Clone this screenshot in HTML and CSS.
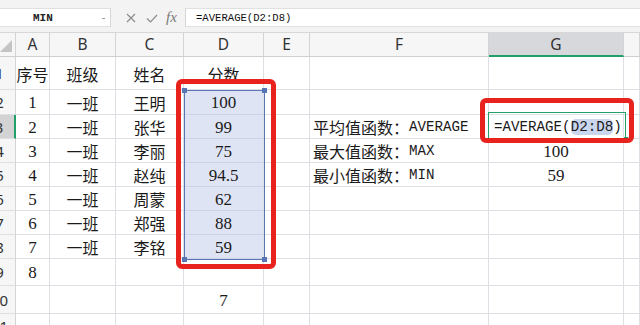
FILE: index.html
```html
<!DOCTYPE html>
<html>
<head>
<meta charset="utf-8">
<link rel="stylesheet" href="styles.css">
</head>
<body>
<div class="toolbar">
  <div class="namebox"><span class="nb-text">MIN</span><span class="nb-arrow"></span></div>
  <div class="tools">
    <svg class="ico-x" width="10" height="10" viewBox="0 0 10 10"><path d="M1 1 L9 9 M9 1 L1 9" stroke="#8c8c8c" stroke-width="1.2" fill="none"/></svg>
    <svg class="ico-ok" width="12" height="9" viewBox="0 0 12 9"><path d="M1 4.5 L4.5 8 L11 1" stroke="#8c8c8c" stroke-width="1.2" fill="none"/></svg>
    <span class="fx">fx</span>
  </div>
  <div class="fbar">=AVERAGE(D2:D8)</div>
</div>

<div class="sheet">
  <div class="grid">
    <!-- header row -->
    <div class="c hd corner"><svg width="12" height="12" viewBox="0 0 12 12"><polygon points="12,0 12,12 0,12" fill="#c4c4c4"/></svg></div>
    <div class="c hd">A</div>
    <div class="c hd">B</div>
    <div class="c hd">C</div>
    <div class="c hd">D</div>
    <div class="c hd">E</div>
    <div class="c hd">F</div>
    <div class="c hd hd-on">G</div>
    <div class="c hd"></div>

    <!-- row 1 -->
    <div class="c rh">1</div>
    <div class="c">序号</div>
    <div class="c">班级</div>
    <div class="c">姓名</div>
    <div class="c">分数</div>
    <div class="c"></div>
    <div class="c"></div>
    <div class="c"></div>
    <div class="c"></div>

    <!-- row 2 -->
    <div class="c rh">2</div>
    <div class="c num">1</div>
    <div class="c">一班</div>
    <div class="c">王明</div>
    <div class="c num sel">100</div>
    <div class="c"></div>
    <div class="c"></div>
    <div class="c"></div>
    <div class="c"></div>

    <!-- row 3 -->
    <div class="c rh rh-on">3</div>
    <div class="c num">2</div>
    <div class="c">一班</div>
    <div class="c">张华</div>
    <div class="c num sel">99</div>
    <div class="c"></div>
    <div class="c left">平均值函数：<span class="lat">AVERAGE</span></div>
    <div class="c left formula"><span class="lat">=AVERAGE(</span><span class="lat ref">D2:D8</span><span class="lat">)</span></div>
    <div class="c"></div>

    <!-- row 4 -->
    <div class="c rh">4</div>
    <div class="c num">3</div>
    <div class="c">一班</div>
    <div class="c">李丽</div>
    <div class="c num sel">75</div>
    <div class="c"></div>
    <div class="c left">最大值函数：<span class="lat">MAX</span></div>
    <div class="c num">100</div>
    <div class="c"></div>

    <!-- row 5 -->
    <div class="c rh">5</div>
    <div class="c num">4</div>
    <div class="c">一班</div>
    <div class="c">赵纯</div>
    <div class="c num sel">94.5</div>
    <div class="c"></div>
    <div class="c left">最小值函数：<span class="lat">MIN</span></div>
    <div class="c num">59</div>
    <div class="c"></div>

    <!-- row 6 -->
    <div class="c rh">6</div>
    <div class="c num">5</div>
    <div class="c">一班</div>
    <div class="c">周蒙</div>
    <div class="c num sel">62</div>
    <div class="c"></div>
    <div class="c"></div>
    <div class="c"></div>
    <div class="c"></div>

    <!-- row 7 -->
    <div class="c rh">7</div>
    <div class="c num">6</div>
    <div class="c">一班</div>
    <div class="c">郑强</div>
    <div class="c num sel">88</div>
    <div class="c"></div>
    <div class="c"></div>
    <div class="c"></div>
    <div class="c"></div>

    <!-- row 8 -->
    <div class="c rh">8</div>
    <div class="c num">7</div>
    <div class="c">一班</div>
    <div class="c">李铭</div>
    <div class="c num sel">59</div>
    <div class="c"></div>
    <div class="c"></div>
    <div class="c"></div>
    <div class="c"></div>

    <!-- row 9 -->
    <div class="c rh">9</div>
    <div class="c num">8</div>
    <div class="c"></div>
    <div class="c"></div>
    <div class="c"></div>
    <div class="c"></div>
    <div class="c"></div>
    <div class="c"></div>
    <div class="c"></div>

    <!-- row 10 -->
    <div class="c rh">10</div>
    <div class="c"></div>
    <div class="c"></div>
    <div class="c"></div>
    <div class="c num">7</div>
    <div class="c"></div>
    <div class="c"></div>
    <div class="c"></div>
    <div class="c"></div>

    <!-- row 11 -->
    <div class="c rh">11</div>
    <div class="c"></div>
    <div class="c"></div>
    <div class="c"></div>
    <div class="c"></div>
    <div class="c"></div>
    <div class="c"></div>
    <div class="c"></div>
    <div class="c"></div>
  </div>

  <div class="selbox">
    <span class="hdl hdl-tl"></span><span class="hdl hdl-tr"></span>
    <span class="hdl hdl-bl"></span><span class="hdl hdl-br"></span>
  </div>
  <div class="activebox"><span class="ghdl"></span></div>
  <div class="redbox red-d"></div>
  <div class="redbox red-g"></div>
</div>
</body>
</html>
```

FILE: styles.css
```css
* { box-sizing: border-box; }
html, body { margin: 0; padding: 0; }
body {
  width: 640px;
  height: 325px;
  overflow: hidden;
  background: #ffffff;
  font-family: "Noto Sans CJK SC", sans-serif;
  color: #1a1a1a;
}

/* ---------- toolbar ---------- */
.toolbar {
  height: 33px;
  background: #f3f3f3;
  padding-top: 8px;
  display: flex;
  align-items: flex-start;
  border-bottom: 1px solid #d8d8d8;
}
.namebox {
  width: 111px;
  height: 19px;
  background: #ffffff;
  border-top: 1px solid #e0e0e0;
  border-bottom: 1px solid #e0e0e0;
  border-right: 1px solid #d6d6d6;
  display: flex;
  align-items: center;
  position: relative;
}
.nb-text {
  font-family: "Liberation Mono", monospace;
  font-weight: bold;
  font-size: 11px;
  color: #222;
  margin-left: 33px;
}
.nb-arrow {
  margin-left: auto;
  margin-right: 5px;
  width: 3px;
  height: 1px;
  background: #9a9a9a;
  margin-top: 2px;
}
.tools {
  width: 74px;
  height: 19px;
  display: flex;
  align-items: center;
  padding-left: 15px;
}
.ico-x { margin-right: 10px; }
.ico-ok { margin-right: 8px; margin-top: 1px; }
.fx {
  font-family: "Liberation Serif", serif;
  font-style: italic;
  font-size: 15px;
  color: #7a7a7a;
  line-height: 1;
}
.fbar {
  flex: 1;
  height: 19px;
  background: #ffffff;
  border-top: 1px solid #e0e0e0;
  border-bottom: 1px solid #e0e0e0;
  border-left: 1px solid #d6d6d6;
  padding-left: 10px;
  font-family: "Liberation Mono", monospace;
  font-size: 10.6px;
  color: #111;
  display: flex;
  align-items: center;
}

/* ---------- sheet ---------- */
.sheet {
  position: relative;
  margin-left: -16px;
  width: 656px;
}
.grid {
  display: grid;
  grid-template-columns: 32px 34px 66px 68px 80px 46px 179px 135px 16px;
  grid-template-rows: 24px 33px 25px 24px 24px 24px 24px 24px 24px 27px 28px 24px;
}
.c {
  border-right: 1px solid #dcdfe4;
  border-bottom: 1px solid #dcdfe4;
  display: flex;
  align-items: center;
  justify-content: center;
  font-size: 16px;
  line-height: 1;
  white-space: nowrap;
  overflow: hidden;
  padding-top: 1px;
}
.hd {
  background: #f6f6f6;
  border-right-color: #d4d4d4;
  border-bottom-color: #cfcfcf;
  font-family: "Noto Sans", sans-serif;
  font-size: 15.5px;
  color: #333;
}
.hd-on {
  background: #d6d8dc;
  border-bottom: 2px solid #1fa06a;
}
.corner {
  justify-content: flex-end;
  align-items: flex-end;
  padding: 0 3px 4px 0;
}
.rh {
  background: #f6f6f6;
  border-right-color: #d4d4d4;
  font-family: "Noto Sans", sans-serif;
  font-size: 15px;
  color: #333;
}
.rh-on {
  background: #d3d3d3;
  border-right: 2px solid #1fa06a;
}
.num {
  font-family: "Liberation Serif", serif;
  font-size: 17px;
}
.left {
  justify-content: flex-start;
  padding-left: 3px;
}
.formula { padding-left: 5px; }
.lat {
  font-family: "Liberation Mono", monospace;
  font-size: 14.2px;
}
.ref {
  background: #cad5ee;
  border-radius: 5px;
  padding: 1px 0;
}
.sel {
  background: #dfe4f5;
  border-bottom-color: #cdd3e6;
}

/* ---------- overlays ---------- */
.selbox {
  position: absolute;
  left: 200px;
  top: 57px;
  width: 81px;
  height: 170px;
  border: 1px solid #5876b4;
}
.hdl {
  position: absolute;
  width: 5px;
  height: 5px;
  background: #5876b4;
}
.hdl-tl { left: -3px; top: -3px; }
.hdl-tr { right: -3px; top: -3px; }
.hdl-bl { left: -3px; bottom: -3px; }
.hdl-br { right: -3px; bottom: -3px; }

.activebox {
  position: absolute;
  left: 504px;
  top: 79px;
  width: 138px;
  height: 27px;
  border: 1px solid #22a06b;
}
.ghdl {
  position: absolute;
  right: -3px;
  bottom: -3px;
  width: 4px;
  height: 4px;
  background: #22a06b;
}

.redbox {
  position: absolute;
  border: 5px solid #e8231d;
  border-radius: 6px;
}
.red-d {
  left: 192px;
  top: 46px;
  width: 100px;
  height: 190px;
}
.red-g {
  left: 496px;
  top: 65px;
  width: 154px;
  height: 45px;
}
```
